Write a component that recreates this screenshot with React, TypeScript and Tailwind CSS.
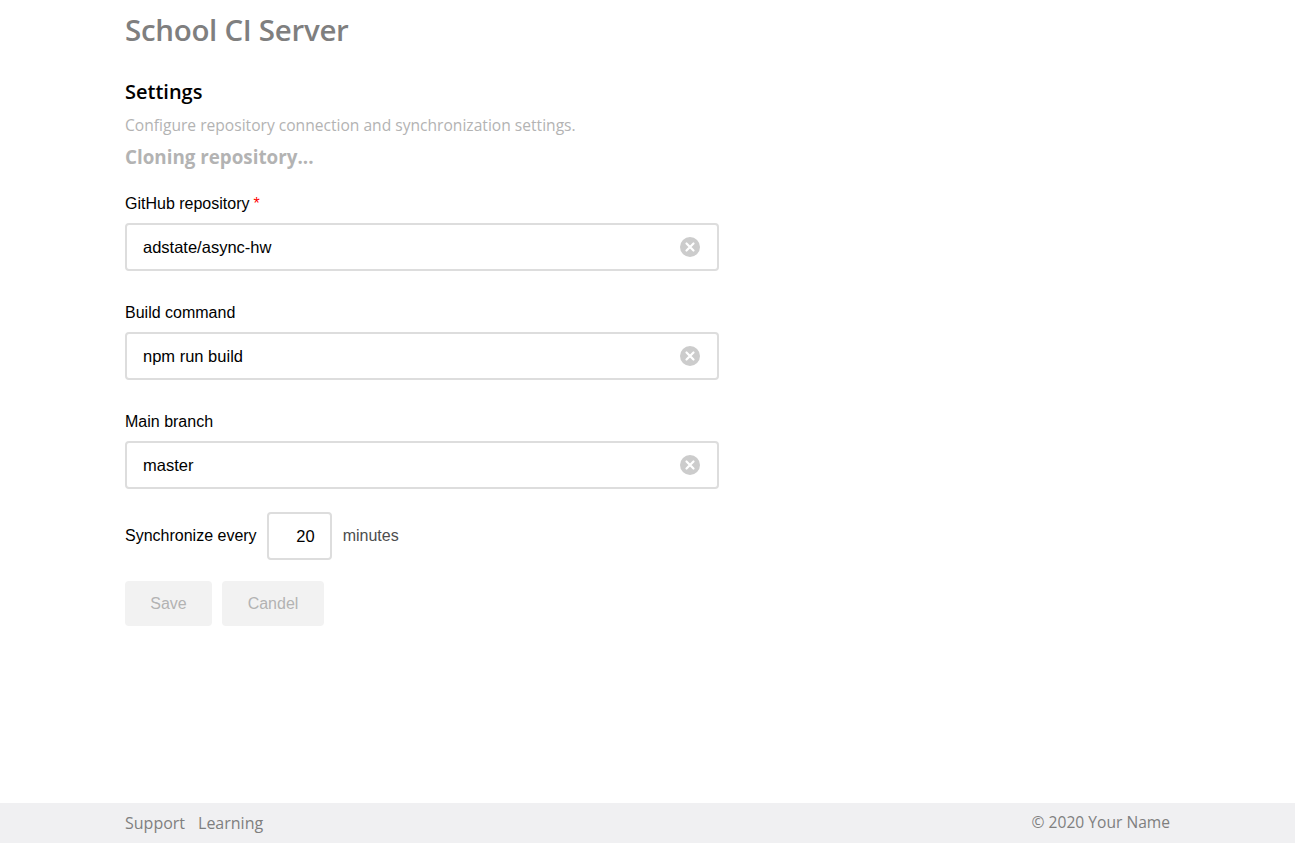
import React, { useState } from "react";

interface Field {
  id: string;
  label: string;
  value: string;
  required?: boolean;
}

const fields: Field[] = [
  { id: "repo", label: "GitHub repository", value: "adstate/async-hw", required: true },
  { id: "command", label: "Build command", value: "npm run build" },
  { id: "branch", label: "Main branch", value: "master" },
];

function ClearIcon() {
  return (
    <svg width="20" height="20" viewBox="0 0 20 20" aria-hidden="true">
      <circle cx="10" cy="10" r="10" fill="#cccccc" />
      <path d="M6.5 6.5l7 7M13.5 6.5l-7 7" stroke="#fff" strokeWidth="2.2" strokeLinecap="round" />
    </svg>
  );
}

export default function App() {
  const [values, setValues] = useState<Record<string, string>>(
    Object.fromEntries(fields.map((f) => [f.id, f.value])),
  );
  const [period, setPeriod] = useState("20");

  return (
    <div className="min-h-screen flex flex-col bg-white font-['Liberation_Sans',Arial,sans-serif]">
      <main className="flex-1 px-[125px]">
        <h1 className="pt-[12px] text-[29.5px] leading-[36px] font-semibold text-[#7f7f7f] font-['Open_Sans',sans-serif] tracking-[-0.3px]">
          School CI Server
        </h1>

        <h2 className="mt-[31px] text-[20px] leading-[26px] font-semibold text-black font-['Open_Sans',sans-serif]">
          Settings
        </h2>
        <p className="mt-[10px] text-[15.6px] leading-[20px] text-[#b3b3b3] font-['Open_Sans',sans-serif]">
          Configure repository connection and synchronization settings.
        </p>
        <p className="mt-[10px] text-[18.8px] leading-[24px] font-bold text-[#b3b3b3] font-['Open_Sans',sans-serif]">
          Cloning repository...
        </p>

        <form className="mt-[25px] w-[594px]" onSubmit={(e) => e.preventDefault()}>
          {fields.map((f) => (
            <div key={f.id} className="mb-[32px]">
              <label htmlFor={f.id} className="block text-[16px] leading-[20px] text-black">
                {f.label}
                {f.required && <span className="text-[#ff0000] ml-[4px]">*</span>}
              </label>
              <div className="mt-[9px] h-[48px] flex items-center border-2 border-[#dddddd] rounded-[4px] pl-[16px] pr-[17px]">
                <input
                  id={f.id}
                  value={values[f.id]}
                  onChange={(e) => setValues((prev) => ({ ...prev, [f.id]: e.target.value }))}
                  className="flex-1 text-[16.5px] text-black outline-none bg-transparent"
                />
                <button
                  type="button"
                  onClick={() => setValues((prev) => ({ ...prev, [f.id]: "" }))}
                  className="flex items-center"
                >
                  <ClearIcon />
                </button>
              </div>
            </div>
          ))}

          <div className="-mt-[9px] flex items-center text-[16px]">
            <span className="text-black">Synchronize every</span>
            <input
              value={period}
              onChange={(e) => setPeriod(e.target.value)}
              className="ml-[10px] w-[65px] h-[48px] border-2 border-[#dddddd] rounded-[4px] text-right pr-[15px] text-[16.5px] text-black outline-none"
            />
            <span className="ml-[11px] text-[#4d4d4d]">minutes</span>
          </div>

          <div className="mt-[21px] flex gap-[10px]">
            <button
              type="submit"
              disabled
              className="h-[45px] w-[87px] rounded-[4px] bg-[#f2f2f2] text-[16px] text-[#b3b3b3]"
            >
              Save
            </button>
            <button
              type="button"
              disabled
              className="h-[45px] w-[102px] rounded-[4px] bg-[#f2f2f2] text-[16px] text-[#b3b3b3]"
            >
              Candel
            </button>
          </div>
        </form>
      </main>

      <footer className="h-[40px] bg-[#f0f0f2] px-[125px] flex items-center justify-between text-[16px] text-[#7f7f7f] font-['Open_Sans',sans-serif]">
        <div className="flex gap-[13px]">
          <a>Support</a>
          <a>Learning</a>
        </div>
        <span className="text-[15.6px]">© 2020 Your Name</span>
      </footer>
    </div>
  );
}
